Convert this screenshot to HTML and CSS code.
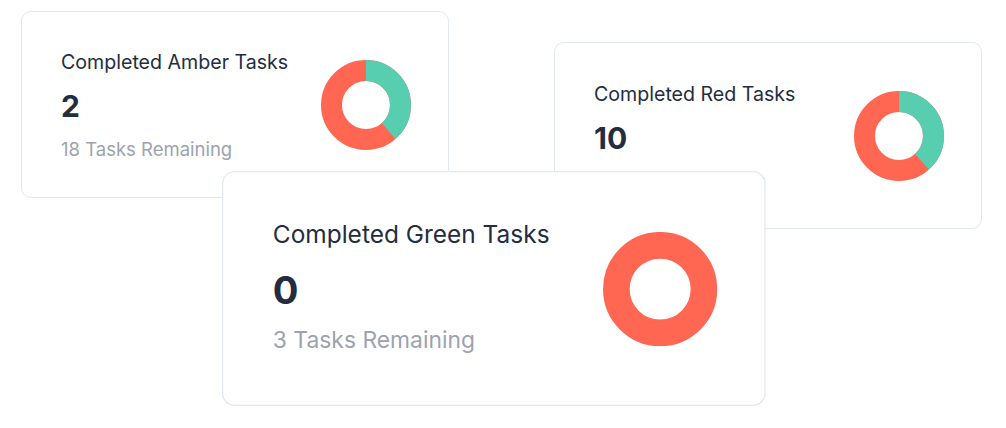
FILE: index.html
```html
<!DOCTYPE html>
<html><head><meta charset="UTF-8" /><link rel="stylesheet" href="styles.css"></head>
<body>
<div class="board">
	<!-- amber -->
	<div class="card amber">
		<div class="stats">
			<div class="label">Completed Amber Tasks</div>
			<div class="count">2</div>
			<div class="left">18 Tasks Remaining</div>
		</div>
		<svg class="donut" viewBox="0 0 90 90" width="90" height="90">
			<circle class="ring-red" cx="45" cy="45" r="34.5" />
			<circle class="ring-green" cx="45" cy="45" r="34.5" pathLength="100" stroke-dasharray="38.6 61.4" />
		</svg>
	</div>
	<!-- red -->
	<div class="card red">
		<div class="stats">
			<div class="label">Completed Red Tasks</div>
			<div class="count">10</div>
			<div class="left">16 Tasks Remaining</div>
		</div>
		<svg class="donut" viewBox="0 0 90 90" width="90" height="90">
			<circle class="ring-red" cx="45" cy="45" r="34.5" />
			<circle class="ring-green" cx="45" cy="45" r="34.5" pathLength="100" stroke-dasharray="38.4 61.6" />
		</svg>
	</div>
	<!-- green, sits on top and a bit bigger -->
	<div class="card green">
		<div class="stats">
			<div class="label">Completed Green Tasks</div>
			<div class="count">0</div>
			<div class="left">3 Tasks Remaining</div>
		</div>
		<svg class="donut" viewBox="0 0 90 90" width="90" height="90">
			<circle class="ring-red" cx="45" cy="45" r="34.5" />
		</svg>
	</div>
</div>
</body></html>
```

FILE: styles.css
```css
body { margin: 0; background: #fff; font-family: Inter, "Noto Sans", sans-serif; }
.board { position: relative; width: 1006px; height: 428px; overflow: hidden; }
.card { position: absolute; box-sizing: border-box; width: 428px; height: 187px;
	display: flex; align-items: center; justify-content: space-between;
	padding: 0 37px 0 39px; background: #fff;
	border: 1px solid #e2e8f0; border-radius: 10px;
}
.amber { left: 21px; top: 11px; }
.red { left: 554px; top: 42px; }
.green { left: 222px; top: 171px; transform: scale(1.27); transform-origin: 0 0; height: 185px; }
.stats { align-self: flex-start; padding-top: 38px; }
.red .stats { padding-top: 39px; }
.green .stats { padding-top: 37px; }
.label { font-size: 19.6px; line-height: 24px; color: #232d3f; }
.green .label { font-size: 19.25px; }
.count { font-size: 30px; line-height: 36px; font-weight: 700; color: #232d3f; margin-top: 14px; }
.left { font-size: 18.5px; line-height: 24px; color: #9ca3af; margin-top: 13px; }
.green .left { margin-top: 9px; font-size: 18px; }
.donut { display: block; flex: none; }
.donut circle { fill: none; stroke-width: 21; }
.ring-red { stroke: #ff6752; }
.ring-green { stroke: #57ceb0; transform: rotate(-90deg); transform-origin: 45px 45px; }
```
